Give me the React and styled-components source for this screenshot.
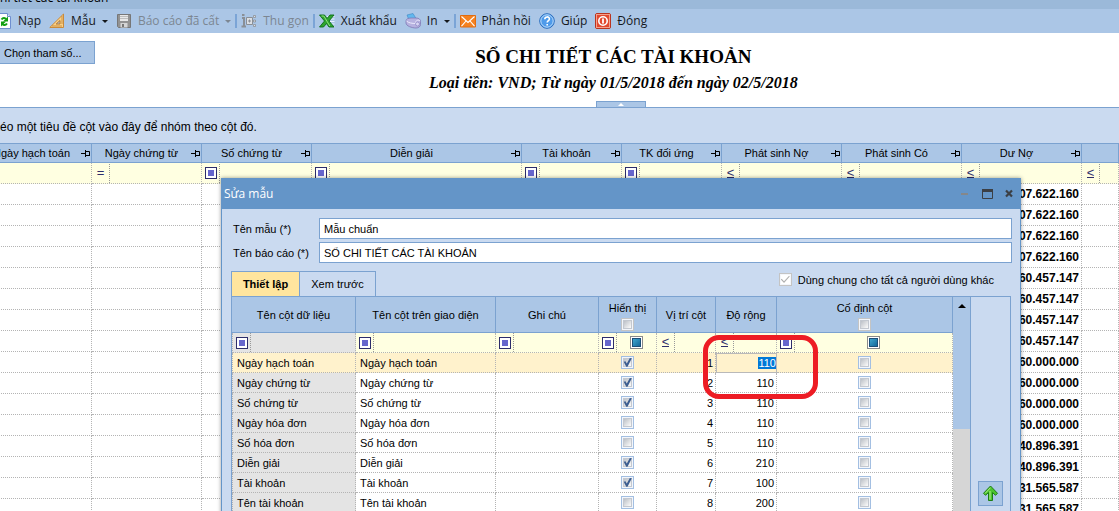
import React, { useEffect, useRef, useState } from 'react'
import styled, { createGlobalStyle } from 'styled-components'

const columns = [
  { title: 'Ngày hạch toán', width: 110, filter: 'equal' },
  { title: 'Ngày chứng từ', width: 110, filter: 'equal' },
  { title: 'Số chứng từ', width: 110, filter: 'box' },
  { title: 'Diễn giải', width: 210, filter: 'box' },
  { title: 'Tài khoản', width: 100, filter: 'box' },
  { title: 'TK đối ứng', width: 100, filter: 'box' },
  { title: 'Phát sinh Nợ', width: 120, filter: 'less' },
  { title: 'Phát sinh Có', width: 120, filter: 'less' },
  { title: 'Dư Nợ', width: 120, filter: 'less' },
  { title: '', filter: 'less' },
]

const balances = [
  '07.622.160',
  '07.622.160',
  '07.622.160',
  '07.622.160',
  '60.457.147',
  '60.457.147',
  '60.457.147',
  '60.457.147',
  '60.000.000',
  '60.000.000',
  '60.000.000',
  '60.000.000',
  '40.896.391',
  '40.896.391',
  '31.565.587',
  '31.565.587',
]

const initialFields = [
  { name: 'Ngày hạch toán', visible: true, width: 110 },
  { name: 'Ngày chứng từ', visible: true, width: 110 },
  { name: 'Số chứng từ', visible: true, width: 110 },
  { name: 'Ngày hóa đơn', visible: false, width: 110 },
  { name: 'Số hóa đơn', visible: false, width: 110 },
  { name: 'Diễn giải', visible: true, width: 210 },
  { name: 'Tài khoản', visible: true, width: 100 },
  { name: 'Tên tài khoản', visible: false, width: 200 },
]

const RefreshIcon = () => (
  <Icon viewBox="0 0 16 16">
    <path d="M1.5 .5h10l3 3v12h-13z" fill="#fff" stroke="#6f8fd0" />
    <path d="M11.5 .5v3h3" fill="#dfe8f8" stroke="#6f8fd0" />
    <path d="M5.5 6.5c1.500-2 3.500-2 4.500-.5" fill="none" stroke="#12a012" strokeWidth="2" />
    <path d="M12 3.500v5H7z" fill="#12a012" />
    <path d="M11 10.5c-1.500 2-3.500 2-4.500.5" fill="none" stroke="#12a012" strokeWidth="2" />
    <path d="M5 13.500v-5h5z" fill="#12a012" />
  </Icon>
)

const RulerIcon = () => (
  <Icon viewBox="0 0 16 16">
    <path d="M14.5 1v13.5H.8z" fill="#fbd083" stroke="#c98a3a" />
    <path d="M11 7.5V11H7.200z" fill="#abc6e6" stroke="#b5762b" />
    <path d="M14 4h-2M14 6h-2M14 8h-2M14 10h-2M4 14v-2M6 14v-2M8 14v-2M10 14v-2M12 14v-2" stroke="#b5762b" strokeWidth=".7" />
  </Icon>
)

const SaveIcon = () => (
  <Icon viewBox="0 0 16 16">
    <path d="M1.5 1.5h13v13h-12l-1-1z" fill="#929292" stroke="#777" />
    <path d="M4 2h8v6H4z" fill="#e8e8e8" />
    <path d="M4 3.5h8M4 5.5h8" stroke="#bdbdbd" />
    <path d="M4.5 10h7v4.5h-7z" fill="#d5d5d5" />
    <path d="M6 11h2v3H6z" fill="#777" />
  </Icon>
)

const CollapseIcon = () => (
  <Icon viewBox="0 0 16 16">
    <path d="M1 2h2.5M1 5h2v8M.5 13.5h4.5" fill="none" stroke="#8a8f96" strokeWidth="2" />
    <path d="M5.5 4.5h6v7h-6z" fill="#dcdfe4" stroke="#8a8f96" />
    <path d="M7 8h3M8.5 6.5v3" stroke="#8a8f96" />
    <path d="M12.5 2.5h2v2h-2zM12.5 7h2v2h-2zM12.5 11.5h2v2h-2z" fill="#dcdfe4" stroke="#8a8f96" strokeWidth=".8" />
  </Icon>
)

const ExcelIcon = () => (
  <Icon viewBox="0 0 16 16">
    <path d="M8 3.5h7.5M9 6h6.5M10 8.5h5.5M9 11h6.5M11 13.5h4.5" stroke="#e9f3ff" strokeWidth="1.2" />
    <path d="M.5 2h5L8 5.5 11 2h4l-5 6 5 6h-5l-2.5-3.500L4.500 14h-4l5-6z" fill="#2fa52f" stroke="#0c6b16" strokeWidth=".9" />
    <path d="M2.500 3h2.300l6 10" fill="none" stroke="#8fe07c" />
  </Icon>
)

const PrintIcon = () => (
  <Icon viewBox="0 0 16 16">
    <path d="M2 2l6-1.500 3 5L4 7z" fill="#62b8ee" stroke="#3f86c4" strokeWidth=".6" />
    <path d="M1 8c0-2 2-3 5-3h5c3 0 4.500 1.500 4.500 3.500v3c0 2-2 3.500-4.500 3.500-4 0-10-2-10-5z" fill="#b7b2e0" stroke="#7d79b5" strokeWidth=".8" />
    <path d="M1.500 8c2 2 6 2.500 9 2.500 0-3 2-4 4.500-3" fill="none" stroke="#eceafc" />
    <circle cx="12.500" cy="11" r="2" fill="#d9d5f4" stroke="#8884c0" strokeWidth=".7" />
  </Icon>
)

const MailIcon = () => (
  <Icon viewBox="0 0 16 16">
    <path d="M.5 2.500h15v11.500H.5z" fill="#f58220" stroke="#e06c10" />
    <path d="M1.500 3.500L8 9.500l6.500-6M1.500 13.200L6 8M14.500 13.200L10 8" fill="none" stroke="#fff" strokeWidth="1.100" />
  </Icon>
)

const HelpIcon = () => (
  <Icon viewBox="0 0 16 16">
    <circle cx="8" cy="8" r="7.300" fill="#4f9bea" stroke="#2a6dbd" />
    <circle cx="8" cy="8" r="6.200" fill="none" stroke="#bcdcfb" />
    <path d="M5.800 6.200c0-3 4.600-3 4.600-.2 0 1.600-2.200 1.700-2.200 3.600M8.200 11v1.600" fill="none" stroke="#fff" strokeWidth="1.600" />
  </Icon>
)

const CloseIcon = () => (
  <Icon viewBox="0 0 16 16">
    <rect x=".5" y=".5" width="15" height="15" rx="1.500" fill="#e2492f" stroke="#b9341f" />
    <rect x="1.500" y="1.500" width="13" height="13" fill="none" stroke="#f4a08c" />
    <circle cx="8" cy="8" r="4.200" fill="none" stroke="#fff" strokeWidth="1.600" />
    <path d="M8 5.500v5" stroke="#fff" strokeWidth="1.800" />
  </Icon>
)

const PinIcon = () => (
  <PinSvg viewBox="0 0 10 9">
    <path d="M0 4.500h4M4.500 1v7M4.500 2.500h4v4h-4M4.500 6.500h4.500" fill="none" stroke="#000" />
  </PinSvg>
)

const ToolItem = ({ icon, label, menu, disabled }) => (
  <ToolButton type="button" disabled={disabled}>
    {icon}
    <span>{label}</span>
    {menu && <Caret />}
  </ToolButton>
)

const Operator = ({ type }) => (
  <OperatorSlot>
    {type === 'box' && <BoxMark />}
    {type === 'equal' && <Sign>=</Sign>}
    {type === 'less' && <Sign $underline>&lt;</Sign>}
  </OperatorSlot>
)

const EditDialog = () => {
  const [fields, setFields] = useState(initialFields)
  const [templateName, setTemplateName] = useState('Mẫu chuẩn')
  const [reportName, setReportName] = useState('SỔ CHI TIẾT CÁC TÀI KHOẢN')
  const widthRef = useRef(null)

  useEffect(() => {
    widthRef.current.focus()
    widthRef.current.select()
  }, [])

  const updateField = (index, change) => {
    setFields(fields.map((field, i) => (i === index ? { ...field, ...change } : field)))
  }

  return (
    <Dialog role="dialog" aria-labelledby="dialog-title">
      <DialogBar>
        <DialogTitle id="dialog-title">Sửa mẫu</DialogTitle>
        <WindowButton type="button" aria-label="Thu nhỏ">
          <svg width="12" height="12">
            <path d="M2 6h7" stroke="#85878a" strokeWidth="2" />
          </svg>
        </WindowButton>
        <WindowButton type="button" aria-label="Phóng to">
          <svg width="12" height="12">
            <path d="M1.5 1.5h10v9h-10z" fill="none" stroke="#3b3f45" />
            <path d="M1 2.500h11" stroke="#3b3f45" strokeWidth="3" />
          </svg>
        </WindowButton>
        <WindowButton type="button" aria-label="Đóng cửa sổ">
          <svg width="12" height="12">
            <path d="M3 2.500l6 6M9 2.500l-6 6" stroke="#3b3f45" strokeWidth="2.200" />
          </svg>
        </WindowButton>
      </DialogBar>
      <Form>
        <label htmlFor="template-name">Tên mẫu (*)</label>
        <TextInput id="template-name" value={templateName} onChange={(e) => setTemplateName(e.target.value)} />
        <label htmlFor="report-name">Tên báo cáo (*)</label>
        <TextInput id="report-name" value={reportName} onChange={(e) => setReportName(e.target.value)} />
      </Form>
      <TabRow>
        <Tab type="button" $active>
          Thiết lập
        </Tab>
        <Tab type="button">Xem trước</Tab>
        <ShareLabel>
          <CheckBox type="checkbox" defaultChecked disabled />
          Dùng chung cho tất cả người dùng khác
        </ShareLabel>
      </TabRow>
      <SetupPanel>
        <SetupTable>
          <colgroup>
            <Col $width={124} />
            <Col $width={140} />
            <Col $width={103} />
            <Col $width={58} />
            <Col $width={59} />
            <Col $width={61} />
            <Col />
          </colgroup>
          <thead>
            <tr>
              <SetupHead>Tên cột dữ liệu</SetupHead>
              <SetupHead>Tên cột trên giao diện</SetupHead>
              <SetupHead>Ghi chú</SetupHead>
              <SetupHead>
                <HeadCheck>
                  Hiển thị
                  <CheckBox type="checkbox" $plain />
                </HeadCheck>
              </SetupHead>
              <SetupHead>Vị trí cột</SetupHead>
              <SetupHead>Độ rộng</SetupHead>
              <SetupHead>
                <HeadCheck>
                  Cố định cột
                  <CheckBox type="checkbox" $plain />
                </HeadCheck>
              </SetupHead>
            </tr>
          </thead>
          <tbody>
            <SetupRow>
              {['box', 'box', 'box', 'box', 'less', 'less', 'box'].map((type, i) => (
                <FilterCell key={i} $locked={i === 0}>
                  <FilterBox>
                    <Operator type={type} />
                    {(i === 3 || i === 6) && <MixedBox aria-hidden="true" />}
                  </FilterBox>
                </FilterCell>
              ))}
            </SetupRow>
            {fields.map((field, i) => (
              <SetupRow key={field.name} $selected={i === 0}>
                <SetupCell $locked={i > 0}>{field.name}</SetupCell>
                <SetupCell>{field.name}</SetupCell>
                <SetupCell />
                <SetupCell $align="center">
                  <CheckBox
                    type="checkbox"
                    aria-label={`Hiển thị ${field.name}`}
                    checked={field.visible}
                    onChange={(e) => updateField(i, { visible: e.target.checked })}
                  />
                </SetupCell>
                <SetupCell $align="right">{i + 1}</SetupCell>
                {i === 0 ? (
                  <EditCell>
                    <WidthInput
                      ref={widthRef}
                      aria-label="Độ rộng"
                      value={field.width}
                      onChange={(e) => updateField(i, { width: e.target.value })}
                    />
                  </EditCell>
                ) : (
                  <SetupCell $align="right">{field.width}</SetupCell>
                )}
                <SetupCell $align="center">
                  <CheckBox type="checkbox" aria-label={`Cố định ${field.name}`} />
                </SetupCell>
              </SetupRow>
            ))}
          </tbody>
        </SetupTable>
        <ScrollTrack>
          <ScrollThumb>
            <ScrollArrow />
          </ScrollThumb>
        </ScrollTrack>
        <SideBar>
          <MoveButton type="button" aria-label="Di chuyển lên">
            <svg width="17" height="17" viewBox="0 0 17 17">
              <path
                d="M8.500 1L15.500 8.300 13.500 10.300 10.500 7.500V15.500H6.500V7.500L3.500 10.300 1.500 8.300z"
                fill="#4cc42e"
                stroke="#1c7d14"
                strokeLinejoin="round"
              />
              <path d="M8.500 2.700L3.200 8.300M8 6v8.500" fill="none" stroke="#b5f08e" />
            </svg>
          </MoveButton>
        </SideBar>
      </SetupPanel>
      <Highlight />
    </Dialog>
  )
}

const App = () => {
  return (
    <Screen>
      <GlobalStyle />
      <TitleBar>
        <span>ổ chi tiết các tài khoản</span>
      </TitleBar>
      <Toolbar>
        <ToolItem icon={<RefreshIcon />} label="Nạp" />
        <ToolItem icon={<RulerIcon />} label="Mẫu" menu />
        <ToolItem icon={<SaveIcon />} label="Báo cáo đã cất" menu disabled />
        <Separator />
        <ToolItem icon={<CollapseIcon />} label="Thu gọn" disabled />
        <Separator />
        <ToolItem icon={<ExcelIcon />} label="Xuất khẩu" />
        <ToolItem icon={<PrintIcon />} label="In" menu />
        <Separator />
        <ToolItem icon={<MailIcon />} label="Phản hồi" />
        <ToolItem icon={<HelpIcon />} label="Giúp" />
        <ToolItem icon={<CloseIcon />} label="Đóng" />
      </Toolbar>
      <ReportHeader>
        <ParamButton type="button">Chọn tham số...</ParamButton>
        <Heading>
          <ReportTitle>SỔ CHI TIẾT CÁC TÀI KHOẢN</ReportTitle>
          <ReportPeriod>Loại tiền: VND; Từ ngày 01/5/2018 đến ngày 02/5/2018</ReportPeriod>
        </Heading>
      </ReportHeader>
      <Splitter>
        <SplitterButton type="button" aria-label="Thu gọn tiêu đề">
          <SplitterArrow />
        </SplitterButton>
      </Splitter>
      <GroupPanel>Kéo một tiêu đề cột vào đây để nhóm theo cột đó.</GroupPanel>
      <ReportTable>
        <colgroup>
          {columns.map((column, i) => (
            <Col key={i} $width={column.width} />
          ))}
        </colgroup>
        <thead>
          <tr>
            {columns.map((column, i) => (
              <ReportHead key={i}>
                {column.title && (
                  <HeadBox>
                    <span>{column.title}</span>
                    <PinIcon />
                  </HeadBox>
                )}
              </ReportHead>
            ))}
          </tr>
        </thead>
        <tbody>
          <ReportRow>
            {columns.map((column, i) => (
              <FilterCell key={i}>
                <FilterBox>
                  <Operator type={column.filter} />
                </FilterBox>
              </FilterCell>
            ))}
          </ReportRow>
          {balances.map((balance, i) => (
            <ReportRow key={i}>
              {columns.map((column, j) => (
                <ReportCell key={j}>{column.title === 'Dư Nợ' && balance}</ReportCell>
              ))}
            </ReportRow>
          ))}
        </tbody>
      </ReportTable>
      <EditDialog />
    </Screen>
  )
}

const GlobalStyle = createGlobalStyle`
  * {
    box-sizing: border-box;
  }
  body {
    margin: 0;
    background: #fff;
    color: #000;
    font: 11px/14px 'Liberation Sans', Arial, sans-serif;
  }
  button, input {
    margin: 0;
    color: inherit;
    font: inherit;
  }
`

const Screen = styled.div`
  position: relative;
  height: 100vh;
  overflow: hidden;
`

const TitleBar = styled.div`
  display: flex;
  align-items: flex-end;
  height: 9px;
  margin-left: -16px;
  padding-bottom: 3px;
  overflow: hidden;
  background: #9bb9d9;
  font: 12px/16px 'Open Sans', sans-serif;
`

const Toolbar = styled.div`
  display: flex;
  align-items: center;
  height: 24px;
  margin-left: -8px;
  background: #abc6e6;
  font: 12px/16px 'Open Sans', sans-serif;
`

const ToolButton = styled.button`
  display: flex;
  align-items: center;
  gap: 6px;
  padding: 0 4px;
  border: 0;
  background: none;
  white-space: nowrap;
  color: ${({ disabled }) => (disabled ? '#7c8692' : '#15181c')};
`

const Icon = styled.svg`
  flex: none;
  width: 16px;
  height: 16px;
`

const Caret = styled.i`
  border: solid transparent;
  border-width: 3px 3px 0;
  border-top-color: currentColor;
`

const Separator = styled.div`
  width: 2px;
  height: 14px;
  background: #7ba4d6;
`

const ReportHeader = styled.header`
  display: flex;
  align-items: flex-start;
  gap: 13px;
  height: 68px;
  padding-top: 8px;
`

const ParamButton = styled.button`
  height: 23px;
  padding: 0 12px 0 4px;
  border: solid #7ba2d0;
  border-width: 1px 1px 1px 0;
  background: #abc6e6;
  white-space: nowrap;
`

const Heading = styled.div`
  flex: 1;
  padding-top: 3px;
  text-align: center;
  font-family: 'Liberation Serif', 'Times New Roman', serif;
  line-height: 26px;
`

const ReportTitle = styled.h1`
  margin: 0;
  font-size: 19px;
`

const ReportPeriod = styled.p`
  margin: 0;
  font-size: 16px;
  font-style: italic;
  font-weight: bold;
`

const Splitter = styled.div`
  display: flex;
  justify-content: center;
  padding-left: 123px;
`

const SplitterButton = styled.button`
  display: flex;
  align-items: center;
  justify-content: center;
  width: 50px;
  height: 6px;
  padding: 0;
  border: 1px solid #7ba2d0;
  border-bottom: 0;
  background: #abc6e6;
`

const SplitterArrow = styled.i`
  border: solid transparent;
  border-width: 0 3px 3px;
  border-bottom-color: #fff;
`

const GroupPanel = styled.div`
  display: flex;
  align-items: center;
  height: 36px;
  margin-left: -8px;
  padding-top: 3px;
  border-top: 1px solid #7ba2d0;
  background: #cadaf0;
  font-size: 12px;
`

const ReportTable = styled.table`
  width: calc(100% + 18px);
  margin-left: -18px;
  table-layout: fixed;
  border-collapse: separate;
  border-spacing: 0;
`

const Col = styled.col`
  width: ${({ $width }) => ($width ? `${$width}px` : 'auto')};
`

const ReportHead = styled.th`
  height: 20px;
  padding: 0;
  border: solid #7ba2d0;
  border-width: 1px 1px 1px 0;
  background: #abc6e6;
  font-weight: normal;
`

const HeadBox = styled.div`
  display: flex;
  align-items: center;

  span {
    flex: 1;
  }
`

const PinSvg = styled.svg`
  width: 10px;
  height: 9px;
`

const ReportRow = styled.tr`
  height: 21px;
`

const ReportCell = styled.td`
  padding: 0 2px 0 0;
  border: dotted #b4b4b4;
  border-width: 0 1px 1px 0;
  font-size: 12px;
  font-weight: bold;
  text-align: right;
`

const FilterCell = styled.td`
  padding: 0;
  border: dotted #b4b4b4;
  border-width: 0 1px 1px 0;
  background: ${({ $locked }) => ($locked ? '#e4e4e4' : '#ffffe1')};
`

const FilterBox = styled.div`
  display: flex;
  align-items: stretch;
  height: 19px;
`

const OperatorSlot = styled.div`
  display: flex;
  flex: none;
  align-items: center;
  justify-content: center;
  width: 18px;
  border-right: 1px dotted #999;
`

const BoxMark = styled.i`
  width: 12px;
  height: 12px;
  border: 1px solid #2d2d6b;
  background: #6666cc;
  box-shadow: inset 0 0 0 2px #fff;
`

const Sign = styled.span`
  color: #2d2d6b;
  font-size: 13px;
  line-height: 8px;
  border-bottom: ${({ $underline }) => ($underline ? '1px solid #2d2d6b' : '0')};
`

const MixedBox = styled.i`
  width: 13px;
  height: 13px;
  margin: auto;
  border: 1px solid #8a8a8a;
  background: linear-gradient(135deg, #4bb8dc, #08568c);
  box-shadow: inset 0 0 0 1px #fff, inset 0 0 0 2px #1c4f78;
`

const CheckBox = styled.input`
  appearance: none;
  position: relative;
  display: block;
  flex: none;
  width: 13px;
  height: 13px;
  border: 1px solid ${({ $plain, disabled }) => ($plain || disabled ? '#c4c4c4' : '#a3bfe2')};
  background: ${({ disabled }) => (disabled ? '#fff' : 'linear-gradient(135deg, #a9afb8, #f6f6f6 75%)')};
  box-shadow: inset 0 0 0 1px #f3f6fb, inset 0 0 0 2px ${({ disabled }) => (disabled ? '#fff' : '#c3c8d0')};

  &:checked::after {
    content: '';
    position: absolute;
    inset: 1px;
    background: ${({ disabled }) => (disabled ? '#b0b0b0' : '#3d5e91')};
    clip-path: ${({ disabled }) =>
      disabled
        ? 'polygon(0 50%, 10% 42%, 36% 70%, 92% 8%, 100% 16%, 36% 88%)'
        : 'polygon(8% 42%, 28% 36%, 42% 62%, 76% 0, 98% 4%, 50% 96%, 36% 96%)'};
  }
`

const Dialog = styled.section`
  position: absolute;
  top: 178px;
  left: 221px;
  right: 98px;
  border: 1px solid #6495c8;
  border-top: 0;
  background: #cadaf0;
  box-shadow: 0 0 4px rgba(0, 0, 0, 0.4);
`

const DialogBar = styled.div`
  display: flex;
  align-items: center;
  gap: 10px;
  height: 31px;
  padding: 0 5px 0 2px;
  background: #6495c8;
`

const DialogTitle = styled.h2`
  flex: 1;
  margin: 0;
  color: #fff;
  font: 12px/16px 'Open Sans', sans-serif;
`

const WindowButton = styled.button`
  display: flex;
  padding: 0;
  border: 0;
  background: none;
`

const Form = styled.div`
  display: grid;
  grid-template-columns: 86px 1fr;
  align-items: center;
  row-gap: 3px;
  padding: 9px 8px 8px 11px;
`

const TextInput = styled.input`
  min-width: 0;
  height: 21px;
  padding: 0 4px;
  border: 1px solid #7ba2d0;
  border-radius: 0;
  background: #fff;
  outline: 0;
`

const TabRow = styled.div`
  display: flex;
  height: 25px;
  padding: 0 26px 0 9px;
`

const Tab = styled.button`
  width: ${({ $active }) => ($active ? '68px' : '77px')};
  padding: 0;
  border: solid #7ba2d0;
  border-width: ${({ $active }) => ($active ? '1px 0 0 1px' : '1px 1px 0')};
  background: ${({ $active }) => ($active ? '#ffe59e' : 'none')};
  font-weight: ${({ $active }) => ($active ? 'bold' : 'normal')};
`

const ShareLabel = styled.label`
  display: flex;
  gap: 6px;
  margin-left: auto;
  padding-top: 2px;
`

const SetupPanel = styled.div`
  display: flex;
  margin: 0 9px 9px;
  border: 1px solid #7ba2d0;
`

const SetupTable = styled.table`
  flex: 1;
  width: 0;
  table-layout: fixed;
  border-collapse: separate;
  border-spacing: 0;
  background: #fff;

  td:first-child {
    border-left-width: 1px;
  }
`

const SetupHead = styled.th`
  height: 36px;
  padding: 0;
  border: solid #7ba2d0;
  border-width: 0 1px 1px 0;
  background: #abc6e6;
  font-weight: normal;
`

const HeadCheck = styled.label`
  display: flex;
  flex-direction: column;
  align-items: center;
  line-height: 19px;
`

const SetupRow = styled.tr`
  height: 20px;
  background: ${({ $selected }) => ($selected ? '#fff2cc' : '#fff')};
`

const SetupCell = styled.td`
  padding: 0 ${({ $align }) => ($align === 'right' ? '2px' : '4px')};
  border: dotted #b4b4b4;
  border-width: 0 1px 1px 0;
  background: ${({ $locked }) => ($locked ? '#e4e4e4' : 'transparent')};
  text-align: ${({ $align }) => $align || 'left'};
  white-space: nowrap;

  ${CheckBox} {
    margin: 0 auto;
  }
`

const EditCell = styled.td`
  padding: 0;
  border: 1px solid #b9b9b9;
`

const WidthInput = styled.input`
  display: block;
  width: 100%;
  height: 18px;
  padding: 0;
  border: 0;
  outline: 0;
  background: transparent;
  text-align: right;

  &::selection {
    background: #0078d7;
    color: #fff;
  }
`

const ScrollTrack = styled.div`
  width: 17px;
  background: #d6d6d6;
`

const ScrollThumb = styled.div`
  display: flex;
  justify-content: center;
  height: 132px;
  padding-top: 7px;
  background: #abc6e6;
`

const ScrollArrow = styled.i`
  height: 4px;
  border: solid transparent;
  border-width: 0 4px 4px;
  border-bottom-color: #000;
`

const SideBar = styled.div`
  width: 40px;
  padding: 184px 7px 0;
  border-left: 1px solid #7ba2d0;
`

const MoveButton = styled.button`
  display: flex;
  align-items: center;
  justify-content: center;
  width: 25px;
  height: 25px;
  padding: 0;
  border: 1px solid #7ba2d0;
  background: #abc6e6;
`

// marker drawn over the width column of the first rows
const Highlight = styled.div`
  position: absolute;
  top: 157px;
  left: 481px;
  width: 115px;
  height: 64px;
  border: 5px solid #ed1c24;
  border-radius: 16px;
  pointer-events: none;
`

export default App
